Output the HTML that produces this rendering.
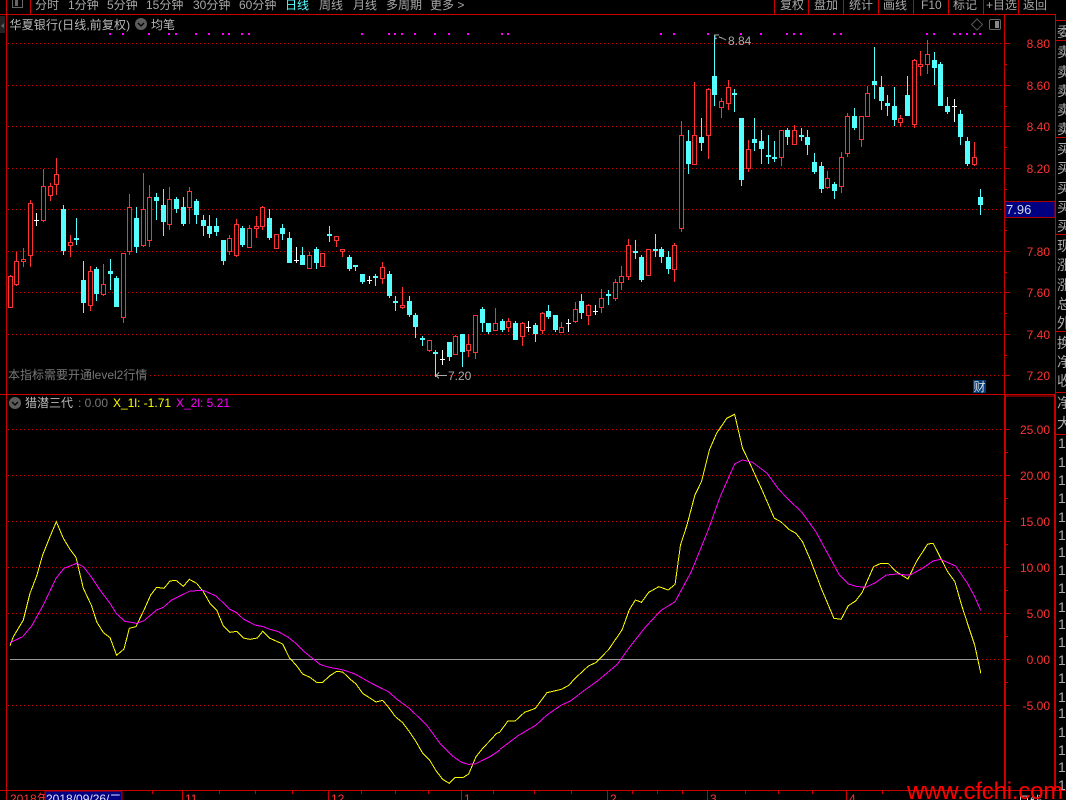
<!DOCTYPE html>
<html lang="zh"><head><meta charset="utf-8"><title>华夏银行</title>
<style>
html,body{margin:0;padding:0;background:#000;width:1066px;height:800px;overflow:hidden}
svg{display:block;position:absolute;left:0;top:0}
text{font-family:"Liberation Sans","WenQuanYi Zen Hei","Noto Sans CJK SC",sans-serif;font-size:12px}
.ax text{fill:#ff3232;text-anchor:end}
.tb text{fill:#a8a8a8}
.sb text{fill:#aaa;font-size:14px}
</style></head><body>
<svg width="1066" height="800" viewBox="0 0 1066 800" xmlns="http://www.w3.org/2000/svg">
<rect width="1066" height="800" fill="#000"/>
<!-- grid -->
<g stroke="#d00000" stroke-width="1" stroke-dasharray="1 3" shape-rendering="crispEdges" fill="none">
<path d="M8 43.5H1004M8 85.5H1004M8 126.5H1004M8 168.5H1004M8 209.5H1004M8 251.5H1004M8 292.5H1004M8 334.5H1004M150 375.5H1004"/>
<path d="M8 429.5H1004M8 475.5H1004M8 521.5H1004M8 567.5H1004M8 613.5H1004M978 659.5H1004M8 705.5H1004"/>
</g>
<path d="M10 659.5H978" stroke="#999" shape-rendering="crispEdges"/>
<!-- frame -->
<g stroke="#c80000" fill="none" shape-rendering="crispEdges">
<path d="M0 14.5H1055.5M6.5 0V800M30.5 0V14M0 394.5H1055.5M1005 396H1055M0 790.5H1066"/>
<path d="M1004.5 14V394M1055.5 14V394"/>
<path d="M1005 395V790M1055 395V790" stroke-width="2"/>
<path d="M774.5 0V14M808.5 0V14M843.5 0V14M878.5 0V14M913.5 0V14M948.5 0V14M983.5 0V14M1018.5 0V14"/>
<path d="M1055 20.5H1066M1055 40.5H1066M1055 137.5H1066M1055 234.5H1066M1055 331.5H1066M1055 392.5H1066M1055 434.5H1066"/>
<path d="M1004 43.5h6M1004 85.5h6M1004 126.5h6M1004 168.5h6M1004 209.5h6M1004 251.5h6M1004 292.5h6M1004 334.5h6M1004 375.5h6M1004 64.5h3M1004 106.5h3M1004 147.5h3M1004 189.5h3M1004 230.5h3M1004 272.5h3M1004 313.5h3M1004 355.5h3"/>
<path d="M1005 429.5h5M1005 475.5h5M1005 521.5h5M1005 567.5h5M1005 613.5h5M1005 659.5h5M1005 705.5h5M1005 452.5h3M1005 498.5h3M1005 544.5h3M1005 590.5h3M1005 636.5h3M1005 682.5h3"/>
<path d="M152.5 790V794M182.5 790V800M219.5 790V794M255.5 790V794M292.5 790V794M328.5 790V800M361.5 790V794M395.5 790V794M428.5 790V794M461.5 790V800M493.5 790V794M534.5 790V794M571.5 790V794M607.5 790V800M632.5 790V794M657.5 790V794M682.5 790V794M707.5 790V800M745.5 790V794M778.5 790V794M812.5 790V794M846.5 790V800M882.5 790V794M918.5 790V794M955.5 790V794M988.5 790V794"/>
</g>
<!-- top left small widgets -->
<rect x="0" y="16" width="5" height="17" fill="#222"/><path d="M1 26l3-3v5z" fill="#666"/>
<path d="M12.5 0V7.5H22.5V0" fill="none" stroke="#666" shape-rendering="crispEdges"/><rect x="15" y="0" width="3" height="6" fill="#666"/>
<!-- toolbar -->
<g class="tb">
<text x="35" y="9">分时</text><text x="68" y="9">1分钟</text><text x="107" y="9">5分钟</text><text x="146" y="9">15分钟</text><text x="193" y="9">30分钟</text><text x="239" y="9">60分钟</text><text x="285" y="9" style="fill:#54ffff">日线</text><text x="319" y="9">周线</text><text x="353" y="9">月线</text><text x="386" y="9">多周期</text><text x="430" y="9">更多 &gt;</text>
<text x="780" y="9">复权</text><text x="814" y="9">盘加</text><text x="849" y="9">统计</text><text x="883" y="9">画线</text><text x="921" y="9">F10</text><text x="953" y="9">标记</text><text x="986" y="9">+目选</text><text x="1023" y="9">返回</text>
</g>
<!-- title -->
<text x="9.500" y="29" fill="#b8b8b8" style="letter-spacing:.12px">华夏银行(日线,前复权)</text>
<circle cx="141" cy="24" r="6" fill="#5c5c5c"/><path d="M138 23l3 3 3-3" fill="none" stroke="#000" stroke-width="1.3"/>
<text x="151" y="29" fill="#b8b8b8">均笔</text>
<path d="M977 19l5.500 5.500-5.500 5.500-5.500-5.500z" fill="none" stroke="#555"/>
<rect x="989.500" y="19.500" width="11" height="10" rx="1.500" fill="none" stroke="#666"/><rect x="995" y="21" width="4" height="7" fill="#888"/>
<!-- magenta dots -->
<path fill="#ff00ff" d="M109 33h2v2h-2zM122 33h2v2h-2zM148 33h2v2h-2zM168 33h2v2h-2zM175 33h2v2h-2zM195 33h2v2h-2zM208 33h2v2h-2zM222 33h2v2h-2zM228 33h2v2h-2zM241 33h2v2h-2zM248 33h2v2h-2zM361 33h2v2h-2zM388 33h2v2h-2zM394 33h2v2h-2zM401 33h2v2h-2zM414 33h2v2h-2zM434 33h2v2h-2zM448 33h2v2h-2zM467 33h2v2h-2zM501 33h2v2h-2zM507 33h2v2h-2zM660 33h2v2h-2zM673 33h2v2h-2zM707 33h2v2h-2zM740 33h2v2h-2zM760 33h2v2h-2zM786 33h2v2h-2zM793 33h2v2h-2zM800 33h2v2h-2zM833 33h2v2h-2zM840 33h2v2h-2zM926 33h2v2h-2zM933 33h2v2h-2zM953 33h2v2h-2zM959 33h2v2h-2zM966 33h2v2h-2zM973 33h2v2h-2zM979 33h2v2h-2z"/>
<!-- red candles -->
<path shape-rendering="crispEdges" stroke="#ff3232" fill="#000" d="M10.500 275V276M8.500 276.500h4V307.500h-4z
M16.500 252V261M16.500 285V286M14.500 261.500h4V284.500h-4z
M23.500 248V259M23.500 262V267M21.500 259.500h4V261.500h-4z
M30.500 200V203M30.500 256V267M28.500 203.500h4V255.500h-4z
M43.500 169V186M43.500 221V222M41.500 186.500h4V220.500h-4z
M50.500 183V186M50.500 196V201M48.500 186.500h4V195.500h-4z
M56.500 158V174M56.500 185V195M54.500 174.500h4V184.500h-4z
M70.500 235V242M70.500 246V257M68.500 242.500h4V245.500h-4z
M90.500 266V271M90.500 306V311M88.500 271.500h4V305.500h-4z
M103.500 264V284M103.500 295V296M101.500 284.500h4V294.500h-4z
M123.500 318V323M121.500 253.500h4V317.500h-4z
M129.500 194V207M129.500 252V255M127.500 207.500h4V251.500h-4z
M143.500 173V209M143.500 246V247M141.500 209.500h4V245.500h-4z
M149.500 185V197M149.500 241V247M147.500 197.500h4V240.500h-4z
M169.500 187V199M169.500 225V230M167.500 199.500h4V224.500h-4z
M189.500 187V191M189.500 208V224M187.500 191.500h4V207.500h-4z
M229.500 235V238M229.500 252V255M227.500 238.500h4V251.500h-4z
M236.500 219V224M236.500 256V257M234.500 224.500h4V255.500h-4z
M249.500 225V228M247.500 228.500h4V247.500h-4z
M256.500 216V226M256.500 229V238M254.500 226.500h4V228.500h-4z
M262.500 206V207M262.500 227V230M260.500 207.500h4V226.500h-4z
M274.500 234.500h4V248.500h-4z
M309.500 252V255M307.500 255.500h4V268.500h-4z
M320.500 253.500h4V266.500h-4z
M336.500 241V247M334.500 236.500h4V240.500h-4z
M342.500 252V257M340.500 249.500h4V251.500h-4z
M382.500 262V267M382.500 279V284M380.500 267.500h4V278.500h-4z
M402.500 287V305M402.500 308V309M400.500 305.500h4V307.500h-4z
M429.500 351V352M427.500 340.500h4V350.500h-4z
M455.500 335V336M453.500 336.500h4V354.500h-4z
M468.500 334V344M468.500 351V357M466.500 344.500h4V350.500h-4z
M475.500 353V359M473.500 315.500h4V352.500h-4z
M495.500 308V323M493.500 323.500h4V330.500h-4z
M508.500 318V321M508.500 328V332M506.500 321.500h4V327.500h-4z
M522.500 322V323M522.500 337V346M520.500 323.500h4V336.500h-4z
M542.500 312V313M542.500 331V334M540.500 313.500h4V330.500h-4z
M561.500 322V327M559.500 327.500h4V332.500h-4z
M575.500 302V309M575.500 322V323M573.500 309.500h4V321.500h-4z
M588.500 304V305M588.500 316V325M586.500 305.500h4V315.500h-4z
M601.500 289V298M601.500 308V313M599.500 298.500h4V307.500h-4z
M615.500 279V282M615.500 299V301M613.500 282.500h4V298.500h-4z
M621.500 266V276M621.500 283V290M619.500 276.500h4V282.500h-4z
M628.500 239V245M628.500 277V280M626.500 245.500h4V276.500h-4z
M648.500 276V276M646.500 249.500h4V275.500h-4z
M674.500 243V245M674.500 270V282M672.500 245.500h4V269.500h-4z
M681.500 121V135M681.500 229V232M679.500 135.500h4V228.500h-4z
M694.500 82V135M692.500 135.500h4V164.500h-4z
M708.500 88V89M708.500 136V159M706.500 89.500h4V135.500h-4z
M721.500 98V101M721.500 108V118M719.500 101.500h4V107.500h-4z
M728.500 80V87M728.500 104V110M726.500 87.500h4V103.500h-4z
M748.500 140V149M748.500 169V172M746.500 149.500h4V168.500h-4z
M781.500 158V166M779.500 130.500h4V157.500h-4z
M794.500 125V130M794.500 145V145M792.500 130.500h4V144.500h-4z
M827.500 171V178M827.500 188V189M825.500 178.500h4V187.500h-4z
M841.500 152V157M841.500 187V193M839.500 157.500h4V186.500h-4z
M847.500 113V116M847.500 154V157M845.500 116.500h4V153.500h-4z
M861.500 140V147M859.500 116.500h4V139.500h-4z
M867.500 86V93M865.500 93.500h4V116.500h-4z
M900.500 115V118M900.500 123V127M898.500 118.500h4V122.500h-4z
M914.500 59V60M914.500 125V128M912.500 60.500h4V124.500h-4z
M920.500 51V64M920.500 67V76M918.500 64.500h4V66.500h-4z
M927.500 40V54M927.500 65V74M925.500 54.500h4V64.500h-4z
M974.500 142V157M974.500 165V166M972.500 157.500h4V164.500h-4z"/>
<!-- cyan candles -->
<path shape-rendering="crispEdges" stroke="#54ffff" fill="#54ffff" d="M63.500 205V255M61.500 209.500h4V250.500h-4z
M76.500 218V245M74.500 238.500h4V239.500h-4z
M83.500 261V313M81.500 280.500h4V302.500h-4z
M96.500 267V301M94.500 269.500h4V293.500h-4z
M110.500 259V290M108.500 271.500h4V273.500h-4z
M116.500 276V307M114.500 278.500h4V306.500h-4z
M136.500 207V253M134.500 218.500h4V246.500h-4z
M156.500 193V220M154.500 197.500h4V200.500h-4z
M163.500 189V236M161.500 205.500h4V221.500h-4z
M176.500 197V213M174.500 199.500h4V208.500h-4z
M183.500 197V226M181.500 207.500h4V223.500h-4z
M196.500 199V224M194.500 201.500h4V214.500h-4z
M203.500 215V236M201.500 220.500h4V225.500h-4z
M209.500 215V238M207.500 226.500h4V233.500h-4z
M216.500 218V236M214.500 226.500h4V231.500h-4z
M223.500 240V265M221.500 240.500h4V260.500h-4z
M242.500 226V247M240.500 228.500h4V244.500h-4z
M269.500 209V240M267.500 218.500h4V237.500h-4z
M282.500 224V240M280.500 228.500h4V233.500h-4z
M289.500 232V263M287.500 238.500h4V262.500h-4z
M302.500 247V265M300.500 255.500h4V264.500h-4z
M316.500 247V269M314.500 249.500h4V262.500h-4z
M329.500 226V242M327.500 234.500h4V235.500h-4z
M349.500 255V271M347.500 257.500h4V268.500h-4z
M355.500 265V271M353.500 265.500h4V266.500h-4z
M362.500 274V284M360.500 274.500h4V281.500h-4z
M375.500 274V286M373.500 276.500h4V277.500h-4z
M389.500 271V298M387.500 274.500h4V295.500h-4z
M395.500 296V311M393.500 301.500h4V302.500h-4z
M409.500 296V317M407.500 301.500h4V314.500h-4z
M415.500 313V338M413.500 315.500h4V326.500h-4z
M422.500 336V346M420.500 338.500h4V339.500h-4z
M435.500 350V377M433.500 352.500h4V353.500h-4z
M449.500 342V361M447.500 342.500h4V356.500h-4z
M462.500 334V367M460.500 334.500h4V351.500h-4z
M482.500 307V332M480.500 309.500h4V322.500h-4z
M488.500 323V334M486.500 323.500h4V331.500h-4z
M502.500 319V332M500.500 321.500h4V329.500h-4z
M515.500 321V340M513.500 323.500h4V339.500h-4z
M535.500 323V342M533.500 325.500h4V333.500h-4z
M548.500 305V319M546.500 311.500h4V316.500h-4z
M555.500 315V332M553.500 315.500h4V329.500h-4z
M581.500 294V319M579.500 301.500h4V312.500h-4z
M608.500 290V305M606.500 294.500h4V295.500h-4z
M635.500 240V259M633.500 251.500h4V252.500h-4z
M641.500 255V282M639.500 257.500h4V279.500h-4z
M655.500 234V257M653.500 249.500h4V250.500h-4z
M661.500 247V263M659.500 249.500h4V256.500h-4z
M668.500 251V274M666.500 257.500h4V268.500h-4z
M688.500 130V174M686.500 141.500h4V163.500h-4z
M701.500 118V151M699.500 137.500h4V142.500h-4z
M714.500 35V106M712.500 76.500h4V94.500h-4z
M734.500 89V112M732.500 93.500h4V94.500h-4z
M741.500 118V186M739.500 118.500h4V179.500h-4z
M754.500 118V151M752.500 139.500h4V142.500h-4z
M761.500 130V164M759.500 141.500h4V148.500h-4z
M768.500 135V164M766.500 155.500h4V156.500h-4z
M774.500 141V162M772.500 157.500h4V158.500h-4z
M787.500 128V145M785.500 130.500h4V136.500h-4z
M801.500 128V141M799.500 135.500h4V136.500h-4z
M807.500 130V155M805.500 137.500h4V144.500h-4z
M814.500 153V174M812.500 162.500h4V171.500h-4z
M821.500 162V193M819.500 166.500h4V188.500h-4z
M834.500 182V199M832.500 184.500h4V190.500h-4z
M854.500 108V130M852.500 116.500h4V127.500h-4z
M874.500 47V99M872.500 81.500h4V84.500h-4z
M881.500 76V110M879.500 87.500h4V100.500h-4z
M887.500 95V116M885.500 103.500h4V105.500h-4z
M894.500 87V126M892.500 106.500h4V119.500h-4z
M907.500 76V116M905.500 95.500h4V115.500h-4z
M934.500 52V85M932.500 60.500h4V67.500h-4z
M940.500 62V106M938.500 64.500h4V105.500h-4z
M947.500 97V114M945.500 106.500h4V111.500h-4z
M960.500 110V145M958.500 114.500h4V136.500h-4z
M967.500 137V166M965.500 141.500h4V163.500h-4z
M980.500 189V215M978.500 197.500h4V204.500h-4z"/>
<!-- white doji -->
<path shape-rendering="crispEdges" stroke="#fff" fill="none" d="M36.500 213V226M34 220.500h5M296.500 247V263M294 260.500h5M369.500 276V284M367 280.500h5M442.500 350V365M440 359.500h5M528.500 321V332M526 327.500h5M568.500 319V332M566 323.500h5M595.500 305V315M593 311.500h5M954.500 99V122M952 106.500h5"/>
<!-- extreme labels -->
<path d="M714 35H719M715 35V39L717 38M719 37L722 38 726 40" fill="none" stroke="#aaa" shape-rendering="crispEdges"/>
<text x="728" y="45" fill="#aaa">8.84</text>
<path d="M436 375.500H447M436 375.500l3-3M436 375.500l3 3" fill="none" stroke="#aaa" shape-rendering="crispEdges"/>
<text x="448" y="380" fill="#aaa">7.20</text>
<text x="8" y="379" fill="#777">本指标需要开通level2行情</text>
<rect x="973" y="380" width="13" height="13" fill="#003c78"/><text x="973.500" y="391" fill="#ddd" style="font-size:12px">财</text>
<!-- axis labels -->
<g class="ax">
<text x="1050" y="48">8.80</text><text x="1050" y="90">8.60</text><text x="1050" y="131">8.40</text><text x="1050" y="173">8.20</text><text x="1050" y="256">7.80</text><text x="1050" y="297">7.60</text><text x="1050" y="339">7.40</text><text x="1050" y="380">7.20</text>
<text x="1050" y="434">25.00</text><text x="1050" y="480">20.00</text><text x="1050" y="526">15.00</text><text x="1050" y="572">10.00</text><text x="1050" y="618">5.00</text><text x="1050" y="664">0.00</text><text x="1050" y="710">-5.00</text>
</g>
<rect x="1005" y="201.500" width="50" height="16" fill="#000080" stroke="#b00000" shape-rendering="crispEdges"/>
<text x="1006" y="214" fill="#cfd8e8" style="font-size:13px">7.96</text>
<!-- sidebar -->
<g class="sb">
<text x="1057" y="37">委</text><text x="1057" y="57">卖</text><text x="1057" y="77">卖</text><text x="1057" y="96">卖</text><text x="1057" y="115">卖</text><text x="1057" y="134">卖</text><text x="1057" y="154">买</text><text x="1057" y="173">买</text><text x="1057" y="193">买</text><text x="1057" y="212">买</text><text x="1057" y="231">买</text><text x="1057" y="251">现</text><text x="1057" y="270">涨</text><text x="1057" y="290">涨</text><text x="1057" y="309">总</text><text x="1057" y="328">外</text><text x="1057" y="348">换</text><text x="1057" y="367">净</text><text x="1057" y="386">收</text><text x="1057" y="408">净</text><text x="1057" y="428">大</text>
<text x="1058" y="448">1</text><text x="1058" y="467">1</text><text x="1058" y="485">1</text><text x="1058" y="503">1</text><text x="1058" y="522">1</text><text x="1058" y="540">1</text><text x="1058" y="557">1</text><text x="1058" y="575">1</text><text x="1058" y="593">1</text><text x="1058" y="612">1</text><text x="1058" y="629">1</text><text x="1058" y="647">1</text><text x="1058" y="665">1</text><text x="1058" y="683">1</text><text x="1058" y="702">1</text><text x="1058" y="718">1</text><text x="1058" y="737">1</text><text x="1058" y="755">1</text><text x="1058" y="772">1</text><text x="1058" y="790">1</text>
</g>
<!-- lower legend -->
<circle cx="15" cy="403" r="6" fill="#5c5c5c"/><path d="M12 402l3 3 3-3" fill="none" stroke="#000" stroke-width="1.300"/>
<text x="25" y="407" fill="#b8b8b8">猎潜三代</text>
<text x="78" y="407" fill="#777">: 0.00</text>
<text x="113" y="407" fill="#ffff00">X_1l: -1.71</text>
<text x="176" y="407" fill="#ff00ff">X_2l: 5.21</text>
<!-- indicator lines -->
<g fill="none" stroke-width="1" shape-rendering="crispEdges">
<g transform="translate(0,500) scale(.33333)">
<polyline vector-effect="non-scaling-stroke" stroke="#ffff00" points="30,437 40,410 55,385 70,360 90,280 110,228 128,165 150,110 169,65 190,115 210,148 228,172 250,265 275,318 290,365 310,398 330,413 350,466 372,447 388,385 408,380 432,330 452,285 470,262 492,265 510,243 528,241 550,259 568,238 590,250 610,275 630,310 650,330 670,378 690,397 710,394 730,414 750,418 772,414 788,394 810,415 848,432 868,473 888,495 908,522 930,532 950,547 968,547 990,527 1010,514 1028,516 1050,537 1068,552 1088,580 1128,606 1148,601 1168,625 1186,650 1208,668 1228,695 1248,725 1268,760 1290,782 1308,812 1328,838 1348,850 1366,832 1390,832 1406,822 1428,770 1448,745 1470,722 1490,700 1500,697"/>
<polyline vector-effect="non-scaling-stroke" stroke="#ff00ff" points="30,428 68,410 95,378 130,315 168,235 192,205 230,190 250,200 272,228 300,270 330,310 350,342 375,364 410,370 432,362 470,330 490,322 515,300 570,273 610,271 648,288 690,328 710,338 730,357 765,375 790,380 810,388 835,395 865,412 885,428 910,453 935,473 960,493 980,500 1030,510 1065,522 1120,553 1165,575 1190,597 1228,625 1280,675 1320,730 1360,770 1385,787 1405,793 1425,792 1470,770 1500,750"/>
</g>
<g transform="translate(500,400) scale(.36098,.33333)">
<polyline vector-effect="non-scaling-stroke" stroke="#ffff00" points="0,995 22,963 42,963 68,937 98,925 130,878 170,868 192,855 205,838 245,798 265,788 300,750 338,690 358,630 375,600 392,607 412,577 440,560 466,570 485,553 500,435 518,375 540,285 558,245 580,150 600,100 628,55 650,43 672,145 690,185 728,275 760,355 778,365 800,388 820,400 838,425 860,480 890,565 925,655 945,658 965,617 985,603 1003,578 1035,500 1055,490 1075,490 1098,515 1130,537 1155,482 1185,432 1200,430 1240,515 1260,545 1280,620 1298,680 1315,735 1325,785 1332,820"/>
<polyline vector-effect="non-scaling-stroke" stroke="#ff00ff" points="0,1048 50,1007 100,975 130,945 170,915 195,903 235,870 270,843 325,793 360,740 400,685 445,632 485,605 530,515 575,395 610,290 650,192 672,180 700,187 740,220 770,265 800,300 835,335 875,395 900,445 940,525 965,552 990,560 1015,561 1040,548 1070,525 1100,522 1135,526 1170,505 1200,483 1220,478 1262,498 1295,550 1315,590 1332,632"/>
</g>
</g>
<!-- date axis -->
<text x="10" y="803" fill="#ff3232">2018年</text>
<rect x="45" y="791" width="77" height="10" fill="#000080" stroke="#c80000"/>
<text x="46" y="803" fill="#e0e0ff">2018/09/26/二</text>
<g fill="#ff3232"><text x="185" y="803">11</text><text x="331" y="803">12</text><text x="464" y="803">1</text><text x="610" y="803">2</text><text x="710" y="803">3</text><text x="849" y="803">4</text></g>
<text x="1018" y="805" fill="#ddd">日线</text>
<text x="907" y="799" fill="#ff0000" style="font-size:24px;letter-spacing:-.2px">www.cfchi.com</text>
</svg>
</body></html>
